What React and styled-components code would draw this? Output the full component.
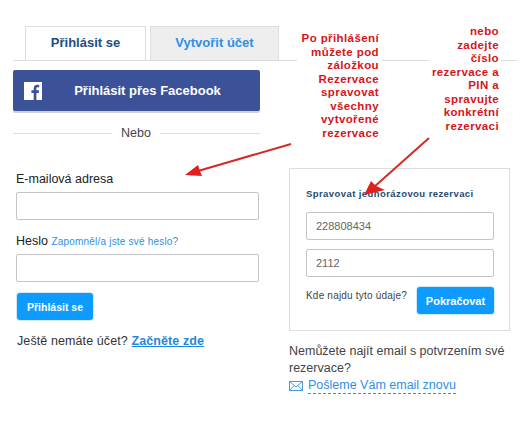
import React from "react";
import styled, { createGlobalStyle } from "styled-components";

const Global = createGlobalStyle`
  html, body { margin: 0; padding: 0; background: #fff; }
  body { font-family: "Liberation Sans", Arial, sans-serif; color: #333; }
`;
const Page = styled.div`
  position: relative; width: 532px; height: 430px; overflow: hidden;
  padding: 26px 15px 0 13px; box-sizing: border-box;
`;
const TabBar = styled.div`
  display: flex; gap: 4px; height: 35px; padding-left: 12px; box-sizing: border-box;
  border-bottom: 1px solid #ddd;
`;
const Tab = styled.div`
  width: ${p => p.$w}px; height: 34px; box-sizing: border-box;
  display: flex; align-items: center; justify-content: center;
  border: 1px solid #ddd; border-bottom: 0;
  background: ${p => (p.$active ? "#fff" : "#eee")};
  color: ${p => (p.$active ? "#234c82" : "#2e8fe6")};
  font-size: 13px; font-weight: 700; padding-bottom: 2px;
`;
const Columns = styled.div`display: flex; gap: 29px; align-items: flex-start;`;
const Left = styled.div`width: 247px; padding-top: 9px;`;
const Right = styled.div`width: 221px; padding-top: 107px;`;
const FbButton = styled.div`
  height: 41px; background: #3b5198; border-radius: 2px; box-shadow: 0 2px 0 #cfd1d6;
  display: flex; align-items: center; color: #fff; font-weight: 700; font-size: 13px;
  padding: 0 11px; box-sizing: border-box;
`;
const FbLabel = styled.span`flex: 1; text-align: center; padding-left: 4px;`;
const Divider = styled.div`
  display: flex; align-items: center; gap: 9px; margin-top: 14px; height: 16px;
  font-size: 12.5px; color: #444;
  &::before, &::after { content: ""; height: 1px; background: #ddd; }
  &::before { width: 99px; }
  &::after { flex: 1; }
`;
const Form = styled.div`padding: 30px 1px 0 3px;`;
const Label = styled.div`font-size: 12.5px; color: #222; line-height: 16px; height: 18px;`;
const HeslaLabel = styled(Label)`margin-top: 13px;`;
const Forgot = styled.span`font-size: 10px; color: #2e8fe6; letter-spacing: 0.2px;`;
const Input = styled.div`
  height: 28px; box-sizing: border-box; border: 1px solid #c4c4c4; border-radius: 2px; background: #fff;
  display: flex; align-items: center; padding-left: 9px; font-size: 11px; color: #666;
  margin-top: ${p => p.$mt || 0}px;
`;
const Blue = styled.div`
  height: 27px; box-sizing: border-box; background: #0d9bff; border-radius: 3px; color: #fff;
  box-shadow: 0 0 0 1px #cfe9fb; font-weight: 700; display: flex; align-items: center; justify-content: center;
  width: ${p => p.$w}px; font-size: ${p => p.$fs}px;
`;
const SignIn = styled(Blue)`margin: 11px 0 0 1px;`;
const Signup = styled.div`margin-top: 13px; margin-left: 1px; font-size: 12.5px; color: #333; line-height: 16px; letter-spacing: 0.1px;`;
const SignupLink = styled.span`color: #1d88dc; font-weight: 700; text-decoration: underline;`;
const Card = styled.div`
  height: 163px; box-sizing: border-box; border: 1px solid #ddd; padding: 19px 15px 0 16px;
`;
const CardTitle = styled.div`font-size: 9.5px; font-weight: 700; color: #234c72; letter-spacing: 0.42px; line-height: 12px; height: 16px;`;
const CardRow = styled.div`display: flex; justify-content: space-between; align-items: flex-start; margin-top: 10px;`;
const Hint = styled.div`font-size: 10px; letter-spacing: 0.2px; color: #444; margin-top: 3px; line-height: 12px;`;
const Help = styled.div`margin-top: 12px; font-size: 12.5px; line-height: 17px; color: #444;`;
const Resend = styled.div`display: flex; align-items: flex-start; gap: 5px; color: #2e8fe6;`;
const ResendLink = styled.span`border-bottom: 1px dashed #2e8fe6; line-height: 16px;`;
const MailIcon = styled.svg`margin-top: 4px;`;
const Note = styled.div`
  position: absolute; top: ${p => p.$top}px; left: ${p => p.$left}px; width: ${p => p.$w}px;
  background: #fff; color: #d7141a; font-weight: 700; font-size: 11.5px; line-height: 13.5px;
  text-align: right; letter-spacing: 0.4px; box-sizing: border-box; padding-right: ${p => p.$pr}px;
`;
const Arrows = styled.svg`position: absolute; left: 0; top: 0; pointer-events: none;`;

const FbIcon = () => (
  <svg width="18" height="18" viewBox="0 0 18 18">
    <rect width="18" height="18" fill="#fff" />
    <path d="M12.4 18v-7h2.3l.4-2.7h-2.7V6.6c0-.8.3-1.3 1.4-1.3h1.4V2.9c-.3 0-1.1-.1-2-.1-2.1 0-3.5 1.2-3.5 3.5v2H7.4V11h2.3v7z" fill="#3b5198" />
  </svg>
);
const Mail = () => (
  <MailIcon width="14" height="10" viewBox="0 0 14 10" fill="none" stroke="#4a9be0" strokeWidth="1">
    <rect x=".5" y=".5" width="13" height="9" />
    <path d="M.5.5 7 6l6.5-5.5M.5 9.5 5 4.5M13.5 9.5 9 4.5" />
  </MailIcon>
);

export default function App() {
  return (
    <Page>
      <Global />
      <TabBar>
        <Tab $active $w={121}>Přihlásit se</Tab>
        <Tab $w={129}>Vytvořit účet</Tab>
      </TabBar>
      <Columns>
        <Left>
          <FbButton><FbIcon /><FbLabel>Přihlásit přes Facebook</FbLabel></FbButton>
          <Divider>Nebo</Divider>
          <Form>
            <Label>E-mailová adresa</Label>
            <Input $mt={3} />
            <HeslaLabel>Heslo <Forgot>Zapomněl/a jste své heslo?</Forgot></HeslaLabel>
            <Input $mt={3} />
            <SignIn $w={76} $fs={10.5}>Přihlásit se</SignIn>
            <Signup>Ještě nemáte účet? <SignupLink>Začněte zde</SignupLink></Signup>
          </Form>
        </Left>
        <Right>
          <Card>
            <CardTitle>Spravovat jednorázovou rezervaci</CardTitle>
            <Input $mt={8}>228808434</Input>
            <Input $mt={9}>2112</Input>
            <CardRow>
              <Hint>Kde najdu tyto údaje?</Hint>
              <Blue $w={77} $fs={11}>Pokračovat</Blue>
            </CardRow>
          </Card>
          <Help>
            Nemůžete najít email s potvrzením své rezervace?
            <Resend><Mail /><ResendLink>Pošleme Vám email znovu</ResendLink></Resend>
          </Help>
        </Right>
      </Columns>
      <Note $top={32} $left={297} $w={85} $pr={3}>Po přihlášení můžete pod záložkou Rezervace spravovat všechny vytvořené rezervace</Note>
      <Note $top={25} $left={429} $w={72} $pr={2}>nebo zadejte číslo rezervace a PIN a spravujte konkrétní rezervaci</Note>
      <Arrows width="532" height="430" viewBox="0 0 532 430">
        <path d="M291 144 198 171" stroke="#d42a26" strokeWidth="2" fill="none" />
        <path d="M185 175 198 165 200 171 202 176z" fill="#e0201c" />
        <path d="M429 138 374 187" stroke="#d42a26" strokeWidth="2" fill="none" />
        <path d="M364 195 371 181 376 186 385 190z" fill="#e0201c" />
      </Arrows>
    </Page>
  );
}
